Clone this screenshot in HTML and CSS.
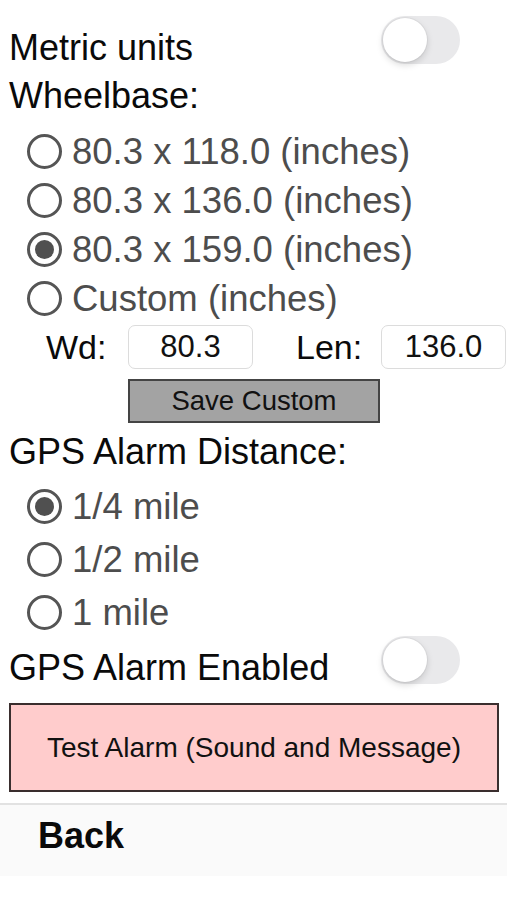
FILE: index.html
```html
<!DOCTYPE html>
<html lang="en">
<head>
    <meta charset="UTF-8">
    <title>Settings</title>
    <meta name="viewport" content="width=device-width, initial-scale=1.0">
    <link rel="stylesheet" href="styles.css">
</head>
<body>
    <div class="settings">
        <!-- Units -->
        <div class="switch-row first">
            <span class="label">Metric units</span>
            <span class="switch"><span class="knob"></span></span>
        </div>

        <!-- Wheelbase -->
        <div class="heading">Wheelbase:</div>
        <div class="radio-group wheelbase">
            <label class="radio"><input type="radio" name="wb">80.3 x 118.0 (inches)</label>
            <label class="radio"><input type="radio" name="wb">80.3 x 136.0 (inches)</label>
            <label class="radio"><input type="radio" name="wb" checked>80.3 x 159.0 (inches)</label>
            <label class="radio"><input type="radio" name="wb">Custom (inches)</label>
        </div>
        <div class="custom-row">
            <span class="small-label">Wd:</span>
            <input class="num-input" type="text" value="80.3">
            <span class="small-label len">Len:</span>
            <input class="num-input" type="text" value="136.0">
        </div>
        <button class="save-button">Save Custom</button>

        <!-- GPS -->
        <div class="heading gps">GPS Alarm Distance:</div>
        <div class="radio-group distance">
            <label class="radio"><input type="radio" name="dist" checked>1/4 mile</label>
            <label class="radio"><input type="radio" name="dist">1/2 mile</label>
            <label class="radio"><input type="radio" name="dist">1 mile</label>
        </div>
        <div class="switch-row enabled">
            <span class="label">GPS Alarm Enabled</span>
            <span class="switch"><span class="knob"></span></span>
        </div>

        <button class="test-button">Test Alarm (Sound and Message)</button>
    </div>

    <!-- Barra in basso -->
    <div class="footer">
        <span class="back">Back</span>
    </div>
</body>
</html>
```

FILE: styles.css
```css
body {
    margin: 0;
    background: #ffffff;
    font-family: 'Liberation Sans', Arial, sans-serif;
    color: #0a0a0a;
}

.settings {
    padding: 0 0 0 9px;
}

.switch-row {
    display: flex;
    align-items: flex-start;
}

.switch-row.first {
    margin-top: 16px;
}

.switch-row.enabled {
    margin-top: -3px;
}

.switch-row .label {
    font-size: 36px;
    line-height: 48px;
    margin-top: 8px;
    width: 372px;
}

.switch {
    width: 79px;
    height: 48px;
    border-radius: 24px;
    background: #e9e9eb;
    position: relative;
}

.knob {
    position: absolute;
    left: 2px;
    top: 2px;
    width: 44px;
    height: 44px;
    border-radius: 50%;
    background: #ffffff;
    box-shadow: 0 3px 7px rgba(0, 0, 0, 0.15), 0 0 0 1px rgba(0, 0, 0, 0.04);
}

.heading {
    font-size: 36px;
    line-height: 48px;
}

.heading.gps {
    margin-top: 5px;
}

.radio-group {
    padding-left: 18px;
}

.radio-group.wheelbase {
    margin-top: 7px;
}

.radio-group.distance {
    margin-top: 4px;
}

.radio {
    display: flex;
    align-items: center;
    height: 49px;
    font-size: 36.5px;
    color: #4d4d4d;
}

.distance .radio {
    height: 53px;
}

.radio input {
    appearance: none;
    -webkit-appearance: none;
    margin: 0 10px 0 0;
    width: 35px;
    height: 35px;
    border: 3.5px solid #555555;
    border-radius: 50%;
    box-sizing: border-box;
    position: relative;
    flex-shrink: 0;
}

.radio input:checked::after {
    content: '';
    position: absolute;
    left: 4.5px;
    top: 4.5px;
    width: 19px;
    height: 19px;
    border-radius: 50%;
    background: #505050;
}

.custom-row {
    display: flex;
    align-items: center;
    margin-top: 2px;
    padding-left: 37px;
    height: 44px;
}

.small-label {
    font-size: 34px;
    width: 82px;
}

.small-label.len {
    margin-left: 43px;
    width: 85px;
}

.num-input {
    width: 125px;
    height: 44px;
    box-sizing: border-box;
    border: 1px solid #dcdcdc;
    border-radius: 7px;
    font-family: inherit;
    font-size: 31px;
    text-align: center;
    color: #111;
    padding: 0;
}

.save-button {
    display: block;
    margin: 10px 0 0 119px;
    width: 252px;
    height: 44px;
    background: #a3a3a3;
    border: 2px solid #444444;
    font-family: inherit;
    font-size: 27.5px;
    color: #111;
    padding: 0;
}

.test-button {
    display: block;
    margin-top: 11px;
    width: 490px;
    height: 89px;
    background: #ffcccc;
    border: 2px solid #3a2e2e;
    font-family: inherit;
    font-size: 28px;
    color: #111;
    padding: 0;
}

.footer {
    margin-top: 11px;
    border-top: 2px solid #e2e2e2;
    background: #fafafa;
    height: 71px;
    padding-left: 38px;
}

.back {
    display: block;
    font-size: 36px;
    font-weight: bold;
    line-height: 40px;
    padding-top: 11px;
}
```
